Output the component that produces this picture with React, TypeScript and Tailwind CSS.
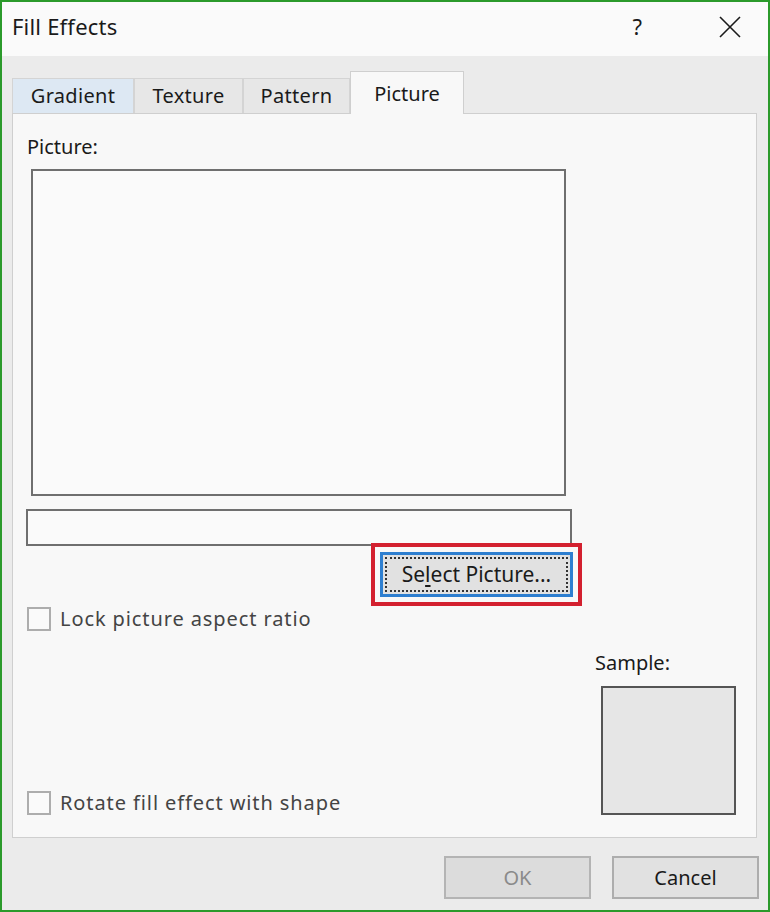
import { useState } from "react";

const font = { fontFamily: '"Noto Sans", "Open Sans", sans-serif' };

function Tab({ label, active, blue, width }: { label: string; active?: boolean; blue?: boolean; width: string }) {
    if (active) {
        return (
            <div className={`${width} relative z-10 -mb-px flex h-[43px] items-start justify-center border border-b-0 border-[#cfcfcf] bg-[#f8f8f8] pt-[7px] text-[20px] text-[#1a1a1a]`}>
                {label}
            </div>
        );
    }
    return (
        <div
            className={`${width} flex h-[35px] items-center justify-center border border-b-0 border-[#d4d4d4] text-[20px] tracking-[0.3px] text-[#1a1a1a] ${
                blue ? "bg-[#dde8f3]" : "bg-[#e7e7e7]"
            }`}
        >
            {label}
        </div>
    );
}

function Checkbox({ label }: { label: string }) {
    const [checked, setChecked] = useState(false);
    return (
        <label className="flex h-[25px] cursor-pointer items-center gap-[9px] pl-[14px]">
            <span
                onClick={() => setChecked(!checked)}
                className="flex h-[24px] w-[24px] items-center justify-center border-2 border-[#adadad] bg-[#fafafa] text-[16px] leading-none text-[#333]"
            >
                {checked ? "✓" : ""}
            </span>
            <span className="text-[20px] tracking-[0.9px] text-[#444]">{label}</span>
        </label>
    );
}

export default function App() {
    return (
        <div style={font} className="flex h-[912px] w-[770px] flex-col border-2 border-[#2b9a2b] bg-[#ebebeb]">
            <header className="flex h-[54px] items-center bg-[#fafafa] pb-[5px] pl-[10px] pr-[20px]">
                <h1 className="flex-1 text-[22px] tracking-[0.2px] text-[#1a1a1a]">Fill Effects</h1>
                <span className="mr-[76px] text-[22px] text-[#1a1a1a]">?</span>
                <svg width="24" height="24" viewBox="0 0 24 24" className="mr-[6px]">
                    <path d="M2 2 L22 22 M22 2 L2 22" stroke="#1a1a1a" strokeWidth="1.6" fill="none" />
                </svg>
            </header>

            <div className="flex flex-1 flex-col pl-[10px] pr-[9px]">
                <div className="flex items-end pt-[15px]">
                    <Tab label="Gradient" blue width="w-[122px]" />
                    <Tab label="Texture" width="w-[109px]" />
                    <Tab label="Pattern" width="w-[107px]" />
                    <Tab label="Picture" active width="w-[114px]" />
                </div>

                <div className="mr-[2px] flex h-[725px] flex-col border border-[#cfcfcf] bg-[#f8f8f8]">
                    <p className="pl-[14px] pt-[20px] text-[20px] leading-[26px] text-[#1a1a1a]">Picture:</p>
                    <div className="ml-[18px] mt-[9px] h-[327px] w-[535px] border-2 border-[#6f6f6f] bg-[#fafafa]" />
                    <div className="ml-[13px] mt-[13px] h-[37px] w-[546px] border-2 border-[#6f6f6f] bg-[#fafafa]" />

                    <div className="ml-[358px] mt-[-3px] w-[211px] border-[4px] border-[#d3202f] p-[5px]">
                        <button className="flex h-[45px] w-full items-center justify-center border-[3px] border-[#2e7fd0] bg-[#e1e1e1] p-[2px]">
                            <span className="flex h-full w-full items-center justify-center border-2 border-dotted border-[#333] text-[21px] text-[#1a1a1a]">
                                Se<span className="underline underline-offset-[3px]">l</span>ect Picture...
                            </span>
                        </button>
                    </div>

                    <div className="flex h-[209px]">
                        <div className="flex flex-1 flex-col justify-between">
                            <Checkbox label="Lock picture aspect ratio" />
                            <Checkbox label="Rotate fill effect with shape" />
                        </div>
                        <div className="flex w-[166px] flex-col justify-end">
                            <p className="pl-[5px] text-[20px] leading-[26px] text-[#1a1a1a]">Sample:</p>
                            <div className="ml-[11px] mt-[10px] h-[129px] w-[135px] border-2 border-[#555] bg-[#e6e6e6]" />
                        </div>
                    </div>
                </div>

                <div className="flex justify-end gap-[21px] pt-[18px]">
                    <button disabled className="h-[43px] w-[147px] border-2 border-[#b4b4b4] bg-[#dcdcdc] text-[20px] text-[#8a8a8a]">
                        OK
                    </button>
                    <button className="h-[43px] w-[147px] border-2 border-[#adadad] bg-[#e1e1e1] text-[20px] text-[#1a1a1a]">
                        Cancel
                    </button>
                </div>
            </div>
        </div>
    );
}
